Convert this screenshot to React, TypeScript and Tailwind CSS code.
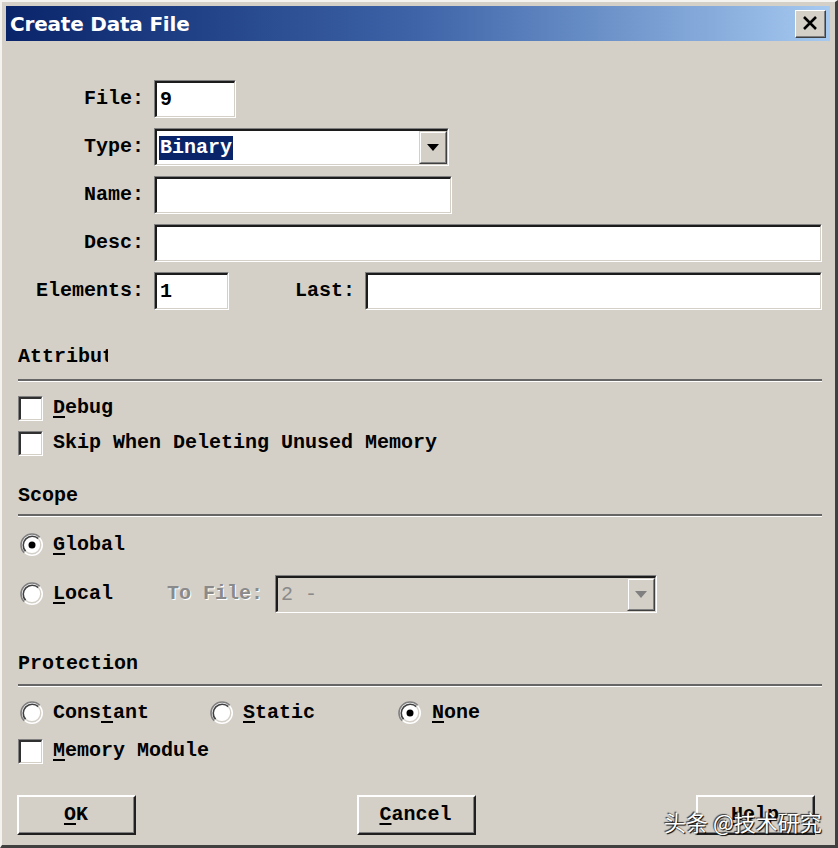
import React from "react";

const U = ({ children }: { children: React.ReactNode }) => (
  <span className="underline underline-offset-[3px] decoration-[1.5px]">{children}</span>
);

// sunken edit box in the classic style
const Field = ({
  className = "",
  disabled = false,
  children,
}: {
  className?: string;
  disabled?: boolean;
  children?: React.ReactNode;
}) => (
  <div className={`h-[38px] border border-t-[#808080] border-l-[#808080] border-b-white border-r-white ${className}`}>
    <div
      className={`h-full flex items-center border-t-2 border-l-2 border-b border-r border-t-[#1c1c1c] border-l-[#1c1c1c] border-b-[#d4d0c8] border-r-[#d4d0c8] ${
        disabled ? "bg-[#d4d0c8]" : "bg-white"
      }`}
    >
      {children}
    </div>
  </div>
);

const DropButton = ({ disabled = false }: { disabled?: boolean }) => (
  <div className="ml-auto h-full w-[28px] border border-t-[#d4d0c8] border-l-[#d4d0c8] border-b-[#404040] border-r-[#404040] bg-[#d4d0c8]">
    <div className="h-full flex items-center justify-center border border-t-white border-l-white border-b-[#808080] border-r-[#808080]">
      <svg width="12" height="7" viewBox="0 0 12 7">
        <path d="M0 0h12L6 7z" fill={disabled ? "#808080" : "#000"} />
      </svg>
    </div>
  </div>
);

const Check = () => (
  <div className="w-[25px] h-[25px] border border-t-[#808080] border-l-[#808080] border-b-white border-r-white">
    <div className="w-full h-full bg-white border-t-2 border-l-2 border-b border-r border-t-[#303030] border-l-[#303030] border-b-[#d4d0c8] border-r-[#d4d0c8]" />
  </div>
);

const Radio = ({ checked = false }: { checked?: boolean }) => (
  <svg width="24" height="24" viewBox="0 0 24 24">
    <circle cx="12" cy="12" r="11" fill="#fff" />
    <path d="M4.22 19.78A11 11 0 0 1 19.78 4.22" stroke="#808080" strokeWidth="1.6" fill="none" />
    <path d="M5.64 18.36A9 9 0 0 1 18.36 5.64" stroke="#404040" strokeWidth="1.6" fill="none" />
    <path d="M18.36 5.64A9 9 0 0 1 5.64 18.36" stroke="#d4d0c8" strokeWidth="1.4" fill="none" />
    {checked && <circle cx="12" cy="12" r="3.5" fill="#000" />}
  </svg>
);

const Header = ({ children, mt }: { children: React.ReactNode; mt: string }) => (
  <div className={`h-[24px] leading-[24px] ${mt}`}>{children}</div>
);

const Rule = ({ mt }: { mt: string }) => (
  <div className={`${mt} h-[3px] border-t-2 border-t-[#666] border-b border-b-white`} />
);

const Button = ({ children }: { children: React.ReactNode }) => (
  <div className="w-[119px] h-[40px] border-t-2 border-l-2 border-t-white border-l-white border-b-2 border-r-2 border-b-[#202020] border-r-[#202020] bg-[#d4d0c8]">
    <div className="h-full flex items-center justify-center border-b border-r border-b-[#808080] border-r-[#808080]">
      {children}
    </div>
  </div>
);

const App = () => {
  return (
    <div className="relative w-[838px] h-[848px] overflow-hidden bg-[#d4d0c8] border-t-2 border-l-2 border-t-[#f4f3ef] border-l-[#f4f3ef] border-r-[3px] border-b-[3px] border-r-[#404040] border-b-[#404040] pt-1 pl-1 pr-[5px] font-['Liberation_Mono',monospace] font-bold text-[20px] text-black flex flex-col">
      {/* title bar */}
      <div className="h-[35px] flex items-center bg-linear-to-r from-[#0a246a] via-[#3f64a8] to-[#a6caf0]">
        <span className="pl-[4px] font-['DejaVu_Sans',sans-serif] text-[20px] font-bold text-white tracking-[-0.2px]">
          Create Data File
        </span>
        <div className="ml-auto mr-[4px] w-[31px] h-[28px] border border-t-white border-l-white border-b-[#404040] border-r-[#404040] bg-[#d4d0c8]">
          <div className="h-full flex items-center justify-center border-b border-r border-b-[#808080] border-r-[#808080]">
            <svg width="16" height="14" viewBox="0 0 16 14">
              <path d="M2 1l12 12M14 1L2 13" stroke="#000" strokeWidth="2.6" />
            </svg>
          </div>
        </div>
      </div>

      <div className="flex flex-col pl-[12px] pr-[8px]">
        {/* form rows */}
        <div className="mt-[39px] flex flex-col gap-[10px]">
          <div className="flex items-center h-[38px]">
            <span className="w-[126px] text-right">File:</span>
            <Field className="ml-[10px] w-[82px]">
              <span className="pl-[3px]">9</span>
            </Field>
          </div>
          <div className="flex items-center h-[38px]">
            <span className="w-[126px] text-right">Type:</span>
            <Field className="ml-[10px] w-[295px]">
              <span className="ml-[2px] bg-[#0a246a] text-white leading-[24px] px-[1px]">Binary</span>
              <DropButton />
            </Field>
          </div>
          <div className="flex items-center h-[38px]">
            <span className="w-[126px] text-right">Name:</span>
            <Field className="ml-[10px] w-[298px]" />
          </div>
          <div className="flex items-center h-[38px]">
            <span className="w-[126px] text-right">Desc:</span>
            <Field className="ml-[10px] flex-1" />
          </div>
          <div className="flex items-center h-[38px]">
            <span className="w-[126px] text-right">Elements:</span>
            <Field className="ml-[10px] w-[75px]">
              <span className="pl-[3px]">1</span>
            </Field>
            <span className="ml-[66px]">Last:</span>
            <Field className="ml-[10px] flex-1" />
          </div>
        </div>

        {/* attributes */}
        <Header mt="mt-[35px]">
          <span className="inline-block w-[90px] overflow-hidden whitespace-nowrap align-top">Attribut</span>
        </Header>
        <Rule mt="mt-[10px]" />
        <div className="mt-[13px] h-[26px] flex items-center gap-[10px]">
          <Check />
          <span>
            <U>D</U>ebug
          </span>
        </div>
        <div className="mt-[9px] h-[26px] flex items-center gap-[10px]">
          <Check />
          <span>Skip When Deleting Unused Memory</span>
        </div>

        {/* scope */}
        <Header mt="mt-[28px]">Scope</Header>
        <Rule mt="mt-[6px]" />
        <div className="mt-[15px] h-[26px] flex items-center pl-[2px] gap-[9px]">
          <Radio checked />
          <span>
            <U>G</U>lobal
          </span>
        </div>
        <div className="mt-[17px] h-[38px] flex items-center pl-[2px]">
          <Radio />
          <span className="ml-[9px] w-[114px]">
            <U>L</U>ocal
          </span>
          <span className="text-[#8a8a8a] [text-shadow:1px_1px_0_#fff]">To File:</span>
          <Field disabled className="ml-[12px] w-[382px]">
            <span className="pl-[3px] text-[#8a8a8a] font-normal">2 -</span>
            <DropButton disabled />
          </Field>
        </div>

        {/* protection */}
        <Header mt="mt-[39px]">Protection</Header>
        <Rule mt="mt-[8px]" />
        <div className="mt-[13px] h-[26px] flex items-center pl-[2px]">
          <div className="w-[190px] flex items-center gap-[9px]">
            <Radio />
            <span>
              Cons<U>t</U>ant
            </span>
          </div>
          <div className="w-[188px] flex items-center gap-[9px]">
            <Radio />
            <span>
              <U>S</U>tatic
            </span>
          </div>
          <div className="flex items-center gap-[10px]">
            <Radio checked />
            <span>
              <U>N</U>one
            </span>
          </div>
        </div>
        <div className="mt-[12px] h-[26px] flex items-center gap-[10px]">
          <Check />
          <span>
            <U>M</U>emory Module
          </span>
        </div>

        {/* buttons */}
        <div className="mt-[31px] ml-[-1px] mr-[7px] flex justify-between">
          <Button>
            <U>O</U>K
          </Button>
          <Button>
            <U>C</U>ancel
          </Button>
          <Button>
            <U>H</U>elp
          </Button>
        </div>
      </div>

      {/* watermark over the Help button */}
      <div className="absolute left-[662px] top-[803px] font-['Noto_Sans_CJK_SC',sans-serif] font-normal text-[22px] text-white [text-shadow:1px_1px_1px_#000,-1px_-1px_1px_#333]">
        头条 @技术研究
      </div>
    </div>
  );
};

export default App;
